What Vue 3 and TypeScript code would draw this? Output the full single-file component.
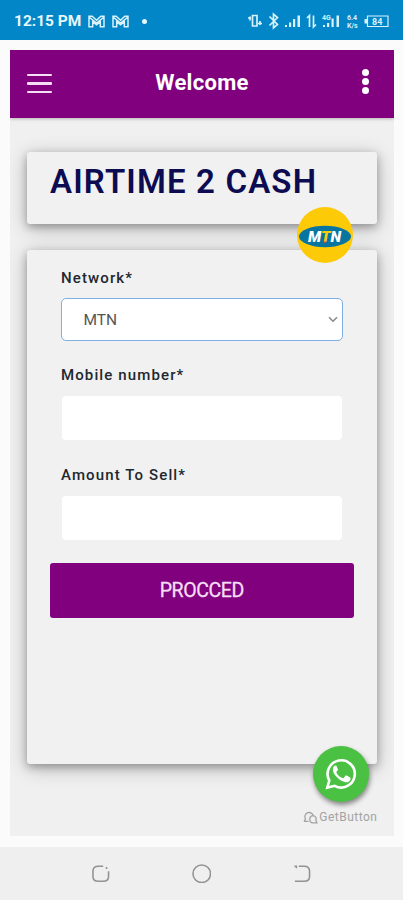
<script setup lang="ts">
import { ref } from 'vue'

const network = ref<string>('MTN')
const mobile = ref<string>('')
const amount = ref<string>('')
</script>

<template>
  <div class="screen">
    <div class="status">
      <span class="time">12:15 PM</span>
      <svg v-for="n in 2" :key="n" class="mail" viewBox="0 0 17 13">
        <path d="M1 1.200h3.200l4.300 4 4.300-4H16v10.600h-3.700V6.700L8.500 9.800 4.700 6.700v5.100H1zM1 2l7.500 6L16 2" />
      </svg>
      <i class="dot"></i>
      <svg class="indicators" viewBox="0 0 143 18">
        <g fill="none" stroke="#d8f1fb" stroke-width="1.700">
          <path d="M5.500 3.500H10v10.500H5.500zM1 6h3M3 4.500v4M11 11.500h4M13 9v4" />
          <path d="M22.500 4.500l8 8-4 3.500V2l4 3.500-8 8" />
          <path d="M62.500 15V3.500L60 6M66.500 3.500V15l2.500-2.500" />
          <path d="M120.500 4h20.500v10.500h-20.500z" stroke-width="1.200" />
        </g>
        <g fill="#d8f1fb">
          <path d="M38 13h2v2h-2zM42 10.500h2.200V15H42zM46 7h2.200v8H46zM50.500 3.500h2.500V15h-2.500z" />
          <path d="M76 13h2v2h-2zM80 11h2.200v4H80zM84.500 6.500h2.200V15h-2.200zM89.500 3.500H92V15h-2.500z" />
          <path d="M117.500 7h2.500v4.500h-2.500z" />
        </g>
        <g class="tiny">
          <text x="75" y="7.500">4G</text>
          <text x="100" y="8">6.4</text>
          <text x="100" y="15.500">K/s</text>
          <text class="charge" x="125" y="12.500">84</text>
        </g>
      </svg>
    </div>

    <div class="page">
      <main class="app">
        <header class="bar">
          <button class="burger" aria-label="Menu"><i></i><i></i><i></i></button>
          <h1>Welcome</h1>
          <button class="more" aria-label="More"><i></i><i></i><i></i></button>
        </header>

        <section class="card heading">
          <h2>AIRTIME 2 CASH</h2>
          <svg class="mtn" viewBox="0 0 56 56">
            <circle cx="28" cy="28" r="28" fill="#fdca08" />
            <ellipse cx="28" cy="29.500" rx="26" ry="10.700" fill="#0875a0" />
            <text x="11" y="35" textLength="33" lengthAdjust="spacingAndGlyphs">M<tspan fill="#fdca08">T</tspan>N</text>
            <path d="M26 34.500h4l-2 2z" fill="#d8442c" />
          </svg>
        </section>

        <form class="card form" @submit.prevent>
          <div class="field">
            <label for="network">Network*</label>
            <div class="select">
              <select id="network" v-model="network"><option>MTN</option></select>
              <svg viewBox="0 0 10 7"><path d="M1 1.300l4 4 4-4" /></svg>
            </div>
          </div>
          <div class="field">
            <label for="mobile">Mobile number*</label>
            <input id="mobile" v-model="mobile" type="tel" />
          </div>
          <div class="field last">
            <label for="amount">Amount To Sell*</label>
            <input id="amount" v-model="amount" type="text" />
          </div>
          <button class="submit" type="submit">PROCCED</button>
        </form>

        <aside class="chat">
          <div class="bubble">
            <svg viewBox="0 0 32 32">
              <path class="ring" d="M2.300 29.700l2-7.200A13.600 13.600 0 1 1 9.600 27.800z" />
              <path fill="#fff" d="M11.700 8.400c-.4-.8-.7-.8-1.100-.8-1.100 0-2.800 1.300-2.800 4 0 2.400 1.700 4.900 2.200 5.500.7 1 4.500 5.600 9.700 7 3 .8 5.200-1 5.600-2.200.3-.9.300-1.800.1-2.100-.4-.6-3.400-2-4.200-2.200-.4-.1-.7 0-1 .4l-1.500 1.900c-.3.300-.6.400-1 .2-2.900-1.200-4.900-3-6.200-5.400-.3-.4-.1-.8.200-1.100.9-1 1.500-1.600 1.200-2.300z" />
            </svg>
          </div>
          <div class="credit">
            <svg viewBox="0 0 15 13"><path d="M1 10.300l1.500-2.300A4.300 4.300 0 1 1 10.500 5.500M1 10.300h4.500M6.800 8.500a3.200 3.200 0 1 1 6 .8l1.200 2.500h-4a3.300 3.300 0 0 1-3.200-3.300z" /></svg>
            <span>GetButton</span>
          </div>
        </aside>
      </main>
    </div>

    <nav class="system">
      <svg viewBox="0 0 20 20"><path d="M12.500 2.300H7.500Q2 2.300 2 7.500v5Q2 17.700 7.500 17.700h5Q18 17.700 18 12.500V7.500M15.200 3.500l1.500 1.200" /></svg>
      <svg viewBox="0 0 20 20"><circle cx="10" cy="10" r="9" /></svg>
      <svg viewBox="0 0 20 20"><path d="M7 2.300h5.500Q18 2.300 18 7.500v5Q18 17.700 12.500 17.700H3M2.500 2.300h2v2" /></svg>
    </nav>
  </div>
</template>

<style>
body { margin: 0; }
</style>

<style scoped>
* { box-sizing: border-box; }
.screen {
  width: 403px;
  height: 900px;
  display: flex;
  flex-direction: column;
  overflow: hidden;
  background: #fbfbfb;
  font-family: Roboto, "Liberation Sans", sans-serif;
}
button { border: 0; background: none; padding: 0; font-family: inherit; }
h1, h2 { margin: 0; }
.status {
  height: 40px;
  flex: none;
  display: flex;
  align-items: center;
  padding: 2px 13px 0 14px;
  background: #0286c7;
  color: #e6f7fd;
}
.time { font-size: 15.500px; font-weight: 700; width: 74px; letter-spacing: 0; white-space: nowrap; }
.mail { width: 17px; height: 13px; margin-right: 7px; fill: none; stroke: #d8f1fb; stroke-width: 1.500; }
.dot { width: 5px; height: 5px; border-radius: 50%; background: #e6f7fd; margin-left: 6px; }
.indicators { width: 143px; height: 18px; margin-left: auto; flex: none; }
.tiny { fill: #d8f1fb; font-size: 7px; font-weight: 700; }
.charge { font-size: 9px; }
.page { flex: none; height: 807px; padding: 10px 9px 11px 9.500px; }
.app {
  height: 786px;
  position: relative;
  background: #f0f0f0;
  display: flex;
  flex-direction: column;
  overflow: hidden;
}
.bar {
  height: 68px;
  flex: none;
  display: flex;
  align-items: center;
  justify-content: space-between;
  padding: 0 25px 0 17.500px;
  background: #80007d;
  color: #fff;
  box-shadow: 0 1px 3px rgba(0, 0, 0, .25);
}
.burger { display: flex; flex-direction: column; gap: 6px; width: 25px; margin-top: -1px; }
.burger i { height: 2.500px; background: #f5dff5; border-radius: 1px; }
.bar h1 { font-size: 22px; line-height: 28px; font-weight: 700; letter-spacing: .3px; margin: -3px 10px 0 0; }
.more { display: flex; flex-direction: column; gap: 2px; margin-top: -5px; }
.more i { width: 7px; height: 7px; border-radius: 50%; background: #fff; }
.card {
  margin: 0 17.500px;
  border-radius: 3px;
  background: #f1f1f1;
  box-shadow: 0 3px 8px rgba(0, 0, 0, .28), 0 4px 20px rgba(0, 0, 0, .24);
}
.heading { height: 72px; flex: none; margin-top: 34px; position: relative; z-index: 2; padding: 10px 23px; }
.heading h2 { font-size: 33px; line-height: 40px; font-weight: 600; letter-spacing: 1.150px; color: #0d0b52; white-space: nowrap; }
.mtn { position: absolute; width: 56px; height: 56px; right: 23.500px; top: 55px; }
.mtn text { font-family: Roboto, sans-serif; font-size: 15px; font-weight: 900; font-style: italic; fill: #fff; }
.form { height: 514px; flex: none; margin-top: 26px; padding: 19px 23px 0; display: flex; flex-direction: column; }
.field { padding: 0 11px; display: flex; flex-direction: column; }
.field + .field { margin-top: 25px; }
.field + .last { margin-top: 26px; }
.field label { font-size: 15px; line-height: 18px; font-weight: 500; letter-spacing: 1.120px; color: #222830; white-space: nowrap; }
.select { height: 43px; margin: 11px 0 0; position: relative; }
.select select {
  width: 100%;
  height: 100%;
  appearance: none;
  background: #fff;
  border: 1.500px solid #7eafe0;
  border-radius: 5px;
  padding: 0 21.500px;
  font: 15.500px Roboto, sans-serif;
  color: #555;
  outline: 0;
}
.select svg { position: absolute; width: 10px; height: 7px; right: 5px; top: 18px; fill: none; stroke: #888; stroke-width: 1.500; }
.field input { height: 44px; width: auto; margin: 12px 1px 0; border: 0; border-radius: 4px; background: #fff; padding: 0 22px; font: 16px Roboto, sans-serif; outline: 0; }
.submit { height: 55px; margin-top: 23px; border-radius: 3px; background: #80007d; color: #f5def5; font-size: 19.500px; letter-spacing: -.4px; -webkit-text-stroke: .3px #f5def5; }
.chat { position: absolute; right: 16.500px; bottom: 11px; display: flex; flex-direction: column; align-items: flex-end; gap: 7px; z-index: 3; }
.bubble {
  width: 56px;
  height: 56px;
  margin-right: 9px;
  border-radius: 50%;
  background: #4ac142;
  display: flex;
  align-items: center;
  justify-content: center;
  box-shadow: 1px 3px 5px rgba(0, 0, 0, .45);
}
.bubble svg { width: 32px; height: 32px; }
.ring { fill: none; stroke: #fff; stroke-width: 2.600; }
.credit { height: 16px; display: flex; align-items: center; gap: 1px; color: #a3a3a3; }
.credit svg { width: 15px; height: 13px; fill: none; stroke: #a3a3a3; stroke-width: 1.300; }
.credit span { font-size: 12px; line-height: 16px; letter-spacing: .5px; }
.system { flex: 1; background: #efefef; display: flex; justify-content: center; align-items: center; gap: 81px; }
.system svg { width: 19.500px; height: 19.500px; fill: none; stroke: #929292; stroke-width: 1.600; }
</style>
